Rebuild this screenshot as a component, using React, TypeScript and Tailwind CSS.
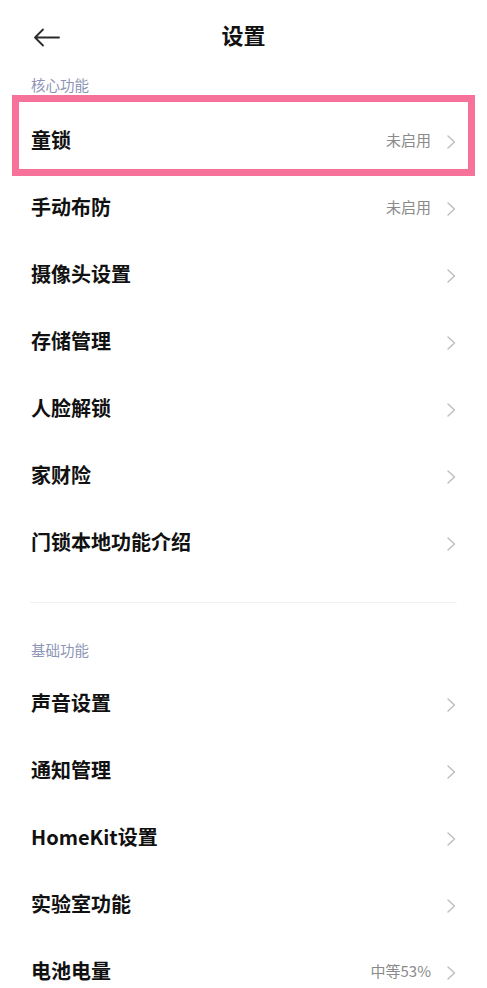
import React from 'react';

interface Row {
  label: string;
  value?: string;
  highlight?: boolean;
}

const coreRows: Row[] = [
  { label: '童锁', value: '未启用', highlight: true },
  { label: '手动布防', value: '未启用' },
  { label: '摄像头设置' },
  { label: '存储管理' },
  { label: '人脸解锁' },
  { label: '家财险' },
  { label: '门锁本地功能介绍' },
];

const basicRows: Row[] = [
  { label: '声音设置' },
  { label: '通知管理' },
  { label: 'HomeKit设置' },
  { label: '实验室功能' },
  { label: '电池电量', value: '中等53%' },
];

const Chevron = () => (
  <svg width="9" height="14" viewBox="0 0 9 14" fill="none" className="shrink-0">
    <path d="M1 1L7.5 7L1 13" stroke="#bdbdbd" strokeWidth="1.4" strokeLinecap="round" strokeLinejoin="round" />
  </svg>
);

const SettingRow: React.FC<{ row: Row }> = ({ row }) => (
  <div className="relative flex items-center h-[67px] pl-[31px] pr-[31px]">
    <span className="flex-1 text-[20px] font-bold text-[#111] pb-[3px]">{row.label}</span>
    {row.value && <span className="text-[15px] text-[#8a8a8a] mr-[16px] pb-[2px]">{row.value}</span>}
    <Chevron />
    {/* Highlight annotation */}
    {row.highlight && (
      <div className="absolute left-[12px] right-[12px] top-[-13px] bottom-[-1px] border-[7px] border-[#f6729a] pointer-events-none" />
    )}
  </div>
);

export default function App() {
  return (
    <div
      className="w-[487px] h-[988px] overflow-hidden bg-white"
      style={{ fontFamily: '"Noto Sans CJK SC", "Noto Sans", sans-serif' }}
    >
      {/* Header */}
      <div className="relative flex items-center justify-center h-[74px] pb-[5px]">
        <svg className="absolute left-[33px] top-[28px]" width="27" height="19" viewBox="0 0 27 19" fill="none">
          <path d="M26 9.5H2M10 1.5L2 9.5L10 17.5" stroke="#2b2b2b" strokeWidth="1.8" strokeLinecap="round" strokeLinejoin="round" />
        </svg>
        <span className="text-[22px] font-bold text-[#111]">设置</span>
      </div>

      {/* Core section */}
      <div className="h-[34px] pl-[31px] text-[14.5px] leading-[22px] text-[#8e95b6]">核心功能</div>
      {coreRows.map(r => (
        <SettingRow key={r.label} row={r} />
      ))}

      {/* Divider */}
      <div className="mt-[25px] mx-[30px] h-px bg-[#f1f1f1]" />

      {/* Basic section */}
      <div className="pt-[36px] pb-[10px] pl-[31px] text-[14.5px] leading-[22px] text-[#8e95b6]">基础功能</div>
      {basicRows.map(r => (
        <SettingRow key={r.label} row={r} />
      ))}
    </div>
  );
}
